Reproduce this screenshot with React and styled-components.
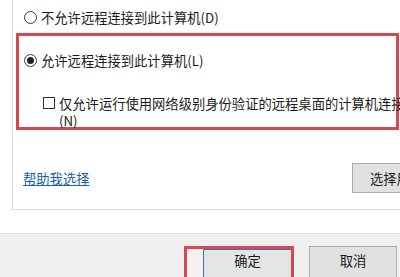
import React from 'react';
import styled, { createGlobalStyle } from 'styled-components';

const GlobalStyle = createGlobalStyle`
  html, body {
    margin: 0;
    padding: 0;
    width: 400px;
    height: 277px;
    overflow: hidden;
    background: #ffffff;
  }
  body {
    font-family: "Noto Sans CJK SC", "Noto Sans", sans-serif;
    font-size: 13.3px;
    color: #1c1c1c;
  }
`;

const Dialog = styled.div`
  width: 400px;
  height: 277px;
  display: flex;
  flex-direction: column;
  background: #fff;
  overflow: hidden;
`;

const Panel = styled.div`
  margin-left: 12px;
  width: 440px;
  height: 210px;
  flex: none;
  border-left: 1px solid #dcdcdc;
  border-bottom: 1px solid #dcdcdc;
  display: flex;
  flex-direction: column;
  padding-top: 10px;
  box-sizing: border-box;
`;

const Option = styled.label`
  display: flex;
  align-items: center;
  gap: 4px;
  height: 15px;
  line-height: 15px;
  white-space: nowrap;
  padding-left: ${p => p.$indent || 0}px;
`;

const Radio = styled.span`
  width: 13px;
  height: 13px;
  box-sizing: border-box;
  border: 1px solid #3a3a3a;
  border-radius: 50%;
  flex: none;
  display: flex;
  align-items: center;
  justify-content: center;
  background: #fff;
  &::after {
    content: '';
    width: 7px;
    height: 7px;
    border-radius: 50%;
    background: ${p => (p.$checked ? '#222' : 'transparent')};
  }
`;

const Highlight = styled.div`
  margin-top: 8px;
  margin-left: 3px;
  width: 383px;
  height: 97px;
  box-sizing: border-box;
  border: 3px solid #d8474c;
  padding-top: 17px;
`;

const CheckRow = styled.div`
  display: flex;
  align-items: flex-start;
  gap: 4px;
  margin-top: 27px;
  padding-left: 24px;
`;

const Check = styled.span`
  width: 12px;
  height: 12px;
  margin-top: 2px;
  box-sizing: border-box;
  border: 1px solid #333;
  background: #fff;
  flex: none;
`;

const CheckText = styled.div`
  line-height: 17px;
  white-space: nowrap;
`;

const Bottom = styled.div`
  display: flex;
  align-items: center;
  justify-content: space-between;
  margin-top: 33px;
  padding-left: 10px;
`;

const Link = styled.a`
  color: #1a5fa8;
  text-decoration: underline;
  cursor: pointer;
`;

const Button = styled.button`
  font: inherit;
  color: #1c1c1c;
  background: #e1e1e1;
  border: 1px solid #adadad;
  box-sizing: border-box;
  width: ${p => p.$w}px;
  height: ${p => p.$h || 30}px;
  padding: 0 0 ${p => p.$pb || 0}px ${p => p.$pl || 0}px;
  flex: none;
  white-space: nowrap;
  text-align: ${p => p.$align || 'center'};
`;

const Footer = styled.div`
  margin-top: 23px;
  flex: 1;
  background: #f0f0f0;
  border-top: 1px solid #e2e2e2;
  display: flex;
  align-items: flex-start;
  padding-top: 12px;
  padding-left: 184px;
  gap: 15px;
  overflow: hidden;
`;

const Marked = styled.div`
  display: flex;
  width: 110px;
  height: 36px;
  box-sizing: border-box;
  border: 3px solid #d8474c;
  background: #f6f1f1;
  padding-left: 16px;
  flex: none;
`;

const DefaultButton = styled(Button)`
  border: 1px solid #2a78c8;
  border-right: none;
  background: #e5e5e5;
`;

export default function App() {
  return (
    <Dialog>
      <GlobalStyle />
      <Panel>
        <Option $indent={11}>
          <Radio />
          <span>不允许远程连接到此计算机(D)</span>
        </Option>
        <Highlight>
          <Option $indent={5}>
            <Radio $checked />
            <span>允许远程连接到此计算机(L)</span>
          </Option>
          <CheckRow>
            <Check />
            <CheckText>
              仅允许运行使用网络级别身份验证的远程桌面的计算机连接(建议)
              <br />
              (N)
            </CheckText>
          </CheckRow>
        </Highlight>
        <Bottom>
          <Link>帮助我选择</Link>
          <Button $w={100} $align="left" $pl={17}>选择用户(S)...</Button>
        </Bottom>
      </Panel>
      <Footer>
        <Marked>
          <DefaultButton $w={88} $h={34} $pb={12}>确定</DefaultButton>
        </Marked>
        <Button $w={88} $h={34} $pb={6}>取消</Button>
      </Footer>
    </Dialog>
  );
}
